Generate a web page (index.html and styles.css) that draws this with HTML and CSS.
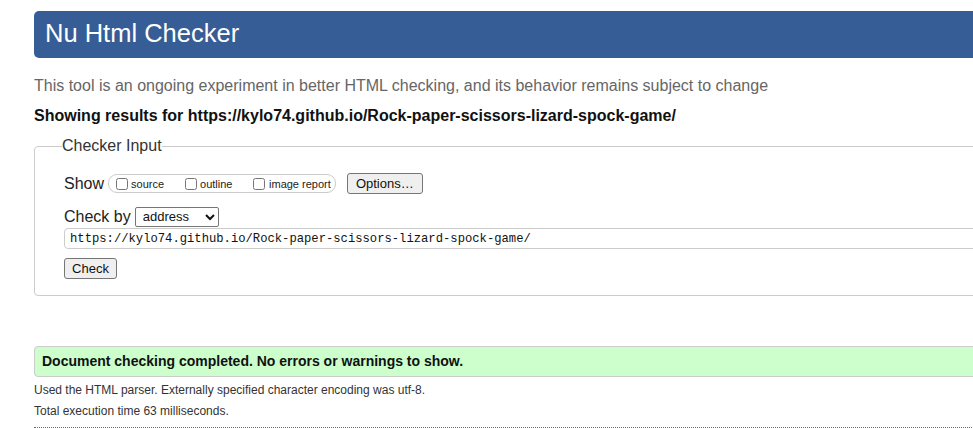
FILE: index.html
```html
<!DOCTYPE html>
<html lang="en">
<head>
<meta charset="utf-8">
<title>Nu Html Checker</title>
<link rel="stylesheet" href="styles.css">
</head>
<body>
<div class="page">
  <h1 class="banner">Nu Html Checker</h1>
  <p class="intro">This tool is an ongoing experiment in better HTML checking, and its behavior remains subject to change</p>
  <p class="showing">Showing results for https://kylo74.github.io/Rock-paper-scissors-lizard-spock-game/</p>
  <fieldset class="input-box">
    <legend>Checker Input</legend>
    <div class="row show-row">
      <span class="row-label">Show</span>
      <span class="opts">
        <label class="opt opt-first"><input type="checkbox"><span>source</span></label>
        <label class="opt"><input type="checkbox"><span>outline</span></label>
        <label class="opt opt-last"><input type="checkbox"><span>image report</span></label>
      </span>
      <button type="button" class="btn btn-options">Options…</button>
    </div>
    <div class="row by-row">
      <span class="row-label">Check by</span>
      <select class="by-select"><option>address</option></select>
    </div>
    <input class="url" type="text" value="https://kylo74.github.io/Rock-paper-scissors-lizard-spock-game/">
    <button type="button" class="btn btn-check">Check</button>
  </fieldset>
  <p class="success">Document checking completed. No errors or warnings to show.</p>
  <p class="details">Used the HTML parser. Externally specified character encoding was utf-8.</p>
  <p class="details">Total execution time 63 milliseconds.</p>
  <hr class="rule">
</div>
</body>
</html>
```
FILE: styles.css
```css
html, body {
  margin: 0;
  padding: 0;
  overflow: hidden;
  background: #fff;
}
body {
  font-family: "Liberation Sans", Arial, sans-serif;
  color: #222;
}
.page {
  width: 1010px;
  padding: 11px 0 0 34px;
}
.banner {
  margin: 0;
  height: 45px;
  padding: 0 0 2px 11px;
  line-height: 45px;
  font-size: 25.5px;
  font-weight: normal;
  color: #fff;
  background: #365d95;
  border-radius: 5px;
}
.intro {
  margin: 18px 0 0;
  font-size: 16px;
  line-height: 20px;
  color: #666;
}
.showing {
  margin: 10px 0 0;
  font-size: 16px;
  line-height: 20px;
  font-weight: bold;
  color: #111;
}
.input-box {
  margin: 10px 0 0;
  padding: 0 0 16px 29px;
  border: 1px solid #ccc;
  border-radius: 4px;
  min-width: 0;
}
.input-box legend {
  margin-left: -2px;
  padding: 0;
  font-size: 16px;
  line-height: 20px;
  color: #333;
}
.row {
  display: flex;
  align-items: center;
  height: 21px;
}
.show-row {
  margin-top: 17px;
}
.row-label {
  font-size: 16px;
  line-height: 21px;
  color: #222;
}
.opts {
  display: flex;
  align-items: center;
  height: 17px;
  margin-left: 4px;
  padding: 0 4px 0 7px;
  border: 1px solid #ccc;
  border-radius: 9px;
}
.opt {
  display: flex;
  align-items: center;
  gap: 3px;
  min-width: 68px;
  font-size: 11px;
  color: #222;
}
.opt-first {
  min-width: 69px;
}
.opt-last {
  min-width: 0;
  gap: 4px;
}
.opt input {
  margin: 0;
  width: 12px;
  height: 12px;
}
.btn {
  font-family: "Liberation Sans", Arial, sans-serif;
  font-size: 13px;
  color: #111;
  background: #efefef;
  border: 1px solid #767676;
  border-radius: 3px;
  height: 21px;
  padding: 0;
}
.btn-options {
  width: 76px;
  margin-left: 11px;
}
.by-row {
  margin-top: 12px;
}
.by-select {
  margin-left: 4px;
  width: 84px;
  height: 20px;
  font-family: "Liberation Sans", Arial, sans-serif;
  font-size: 13px;
  color: #111;
  background: #fff;
  border: 1px solid #767676;
  border-radius: 2px;
  padding: 0 0 0 3px;
}
.url {
  display: block;
  box-sizing: border-box;
  margin: 1px 0 0;
  width: 100%;
  height: 21px;
  padding: 0 0 0 5px;
  font-family: "Liberation Mono", "DejaVu Sans Mono", monospace;
  font-size: 12.2px;
  color: #111;
  border: 1px solid #ccc;
  border-radius: 4px;
  background: #fff;
}
.btn-check {
  display: block;
  width: 53px;
  margin-top: 9px;
}
.success {
  margin: 50px 0 0;
  padding: 0 0 0 7px;
  height: 29px;
  line-height: 29px;
  font-size: 14px;
  font-weight: bold;
  color: #111;
  background: #ccffcc;
  border: 1px solid #ccc;
  border-radius: 4px;
}
.details {
  margin: 0;
  font-size: 12px;
  line-height: 21px;
  color: #333;
}
.success + .details {
  margin-top: 3px;
}
.rule {
  margin: 5px 0 0;
  border: 0;
  border-top: 1px dotted #666;
  height: 0;
}
```
